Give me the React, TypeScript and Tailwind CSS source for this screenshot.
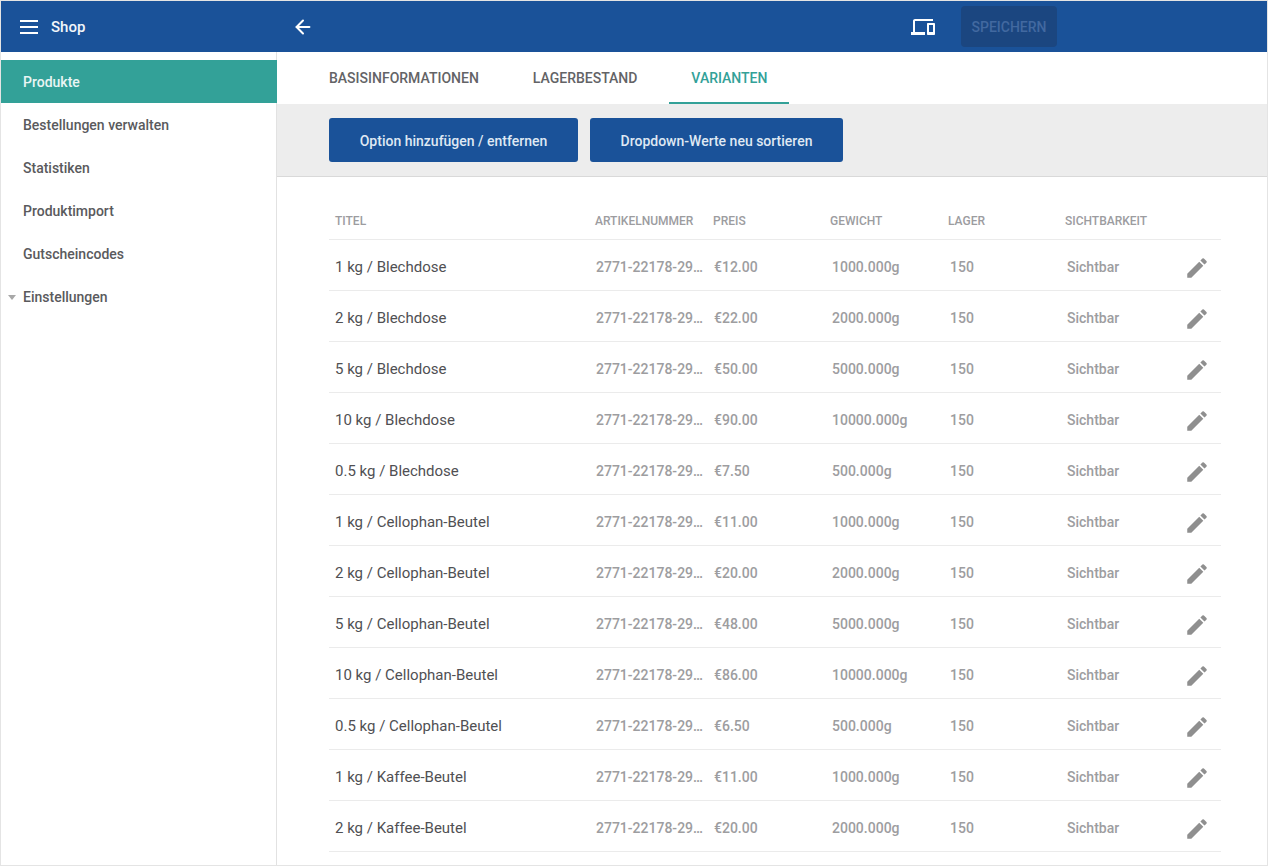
import { ArrowLeft } from 'lucide-react';

const navItems = ['Produkte', 'Bestellungen verwalten', 'Statistiken', 'Produktimport', 'Gutscheincodes'];

const rows = [
  ['1 kg / Blechdose', '€12.00', '1000.000g'],
  ['2 kg / Blechdose', '€22.00', '2000.000g'],
  ['5 kg / Blechdose', '€50.00', '5000.000g'],
  ['10 kg / Blechdose', '€90.00', '10000.000g'],
  ['0.5 kg / Blechdose', '€7.50', '500.000g'],
  ['1 kg / Cellophan-Beutel', '€11.00', '1000.000g'],
  ['2 kg / Cellophan-Beutel', '€20.00', '2000.000g'],
  ['5 kg / Cellophan-Beutel', '€48.00', '5000.000g'],
  ['10 kg / Cellophan-Beutel', '€86.00', '10000.000g'],
  ['0.5 kg / Cellophan-Beutel', '€6.50', '500.000g'],
  ['1 kg / Kaffee-Beutel', '€11.00', '1000.000g'],
  ['2 kg / Kaffee-Beutel', '€20.00', '2000.000g'],
];

const gridCols = 'grid grid-cols-[260px_118px_117px_118px_117px_1fr]';

function MenuIcon() {
  return (
    <svg width="18" height="14" viewBox="0 0 18 14" fill="#fff">
      <path d="M0 0h18v2H0zM0 6h18v2H0zM0 12h18v2H0z" />
    </svg>
  );
}

function DevicesIcon() {
  return (
    <svg width="24" height="24" viewBox="0 0 24 24" fill="#fff">
      <path d="M4 6h18V4H4c-1.1 0-2 .9-2 2v11H0v3h14v-3H4V6zm19 2h-6c-.55 0-1 .45-1 1v10c0 .55.45 1 1 1h6c.55 0 1-.45 1-1V9c0-.55-.45-1-1-1zm-1 9h-4v-7h4v7z" />
    </svg>
  );
}

function EditIcon() {
  return (
    <svg width="26" height="26" viewBox="0 0 24 24" fill="#8f8f8f" className="mt-[2px]">
      <path d="M3 17.25V21h3.75L17.81 9.94l-3.75-3.75L3 17.25zM20.71 7.04a1 1 0 0 0 0-1.41l-2.34-2.34a1 1 0 0 0-1.41 0l-1.83 1.83 3.75 3.75 1.83-1.83z" />
    </svg>
  );
}

export default function App() {
  return (
    <div className="h-[866px] overflow-hidden border border-[#e4e4e4] bg-white font-['Roboto',sans-serif] flex flex-col">
      <header className="h-[51px] shrink-0 bg-[#1a5299] flex items-center text-white">
        <div className="w-[275px] shrink-0 flex items-center pl-[19px]">
          <MenuIcon />
          <span className="ml-[13px] pt-[2px] text-[15px] font-medium text-[#f2f6fa]">Shop</span>
        </div>
        <ArrowLeft size={22} strokeWidth={2.2} className="ml-[16px]" />
        <div className="ml-auto flex items-center mr-[210px]">
          <DevicesIcon />
          <button className="ml-[26px] w-[96px] h-[41px] pt-[2px] rounded-[4px] bg-[#1b4680] text-[14px] font-medium text-[#4269a0]">
            SPEICHERN
          </button>
        </div>
      </header>

      <div className="flex flex-1 min-h-0">
        <aside className="w-[275px] shrink-0 pt-2 text-[14px] font-medium text-[#5a5a5d]">
          {navItems.map((item, i) => (
            <div
              key={item}
              className={`h-[43px] pt-[2px] flex items-center pl-[22px] ${i === 0 ? 'relative w-[276px] bg-[#33a198] text-[#e9f5f4]' : ''}`}
            >
              {item}
            </div>
          ))}
          <div className="relative h-[43px] pt-[2px] flex items-center pl-[22px]">
            <span className="absolute left-[7px] top-[20px] border-x-[4px] border-x-transparent border-t-[5px] border-t-[#a8a8a8]" />
            Einstellungen
          </div>
        </aside>

        <main className="flex-1 min-w-0 border-l border-[#e2e2e2]">
          <div className="h-[52px] flex pl-[30px] text-[14px] font-medium text-[#636366]">
            <div className="px-[22px] flex items-center">BASISINFORMATIONEN</div>
            <div className="px-[32px] flex items-center">LAGERBESTAND</div>
            <div className="relative w-[120px] flex items-center justify-center text-[#33a198]">
              VARIANTEN
              <span className="absolute inset-x-0 bottom-0 h-[2px] bg-[#33a198]" />
            </div>
          </div>

          <div className="h-[73px] bg-[#ededed] border-b border-[#d9d9d9] pl-[52px] pt-[14px] flex gap-3">
            <button className="w-[249px] h-[44px] pt-[2px] rounded-[3px] bg-[#1a5299] text-[14px] font-medium text-[#dfe8f3]">
              Option hinzufügen / entfernen
            </button>
            <button className="w-[253px] h-[44px] pt-[2px] rounded-[3px] bg-[#1a5299] text-[14px] font-medium text-[#dfe8f3]">
              Dropdown-Werte neu sortieren
            </button>
          </div>

          <div className="ml-[52px] w-[892px] pt-[34px]">
            <div className={`${gridCols} h-[29px] pt-px border-b border-[#ebebeb] text-[12px] font-medium text-[#9c9c9f]`}>
              <div className="pl-[6px]">TITEL</div>
              <div className="pl-[6px]">ARTIKELNUMMER</div>
              <div className="pl-[6px]">PREIS</div>
              <div className="pl-[6px]">GEWICHT</div>
              <div className="pl-[6px]">LAGER</div>
              <div className="pl-[6px]">SICHTBARKEIT</div>
            </div>
            {rows.map(([title, price, weight]) => (
              <div
                key={title}
                className={`${gridCols} h-[51px] pt-[3px] items-center border-b border-[#ebebeb] text-[14px] leading-[20px] font-medium text-[#9d9da0]`}
              >
                <div className="pl-[6px] text-[15px] font-normal text-[#505053]">{title}</div>
                <div className="pl-[7px] whitespace-nowrap">2771-22178-29…</div>
                <div className="pl-[7px]">{price}</div>
                <div className="pl-[8px]">{weight}</div>
                <div className="pl-[8px]">150</div>
                <div className="flex items-center justify-between pl-[8px] pr-[11px]">
                  Sichtbar
                  <EditIcon />
                </div>
              </div>
            ))}
          </div>
        </main>
      </div>
    </div>
  );
}
